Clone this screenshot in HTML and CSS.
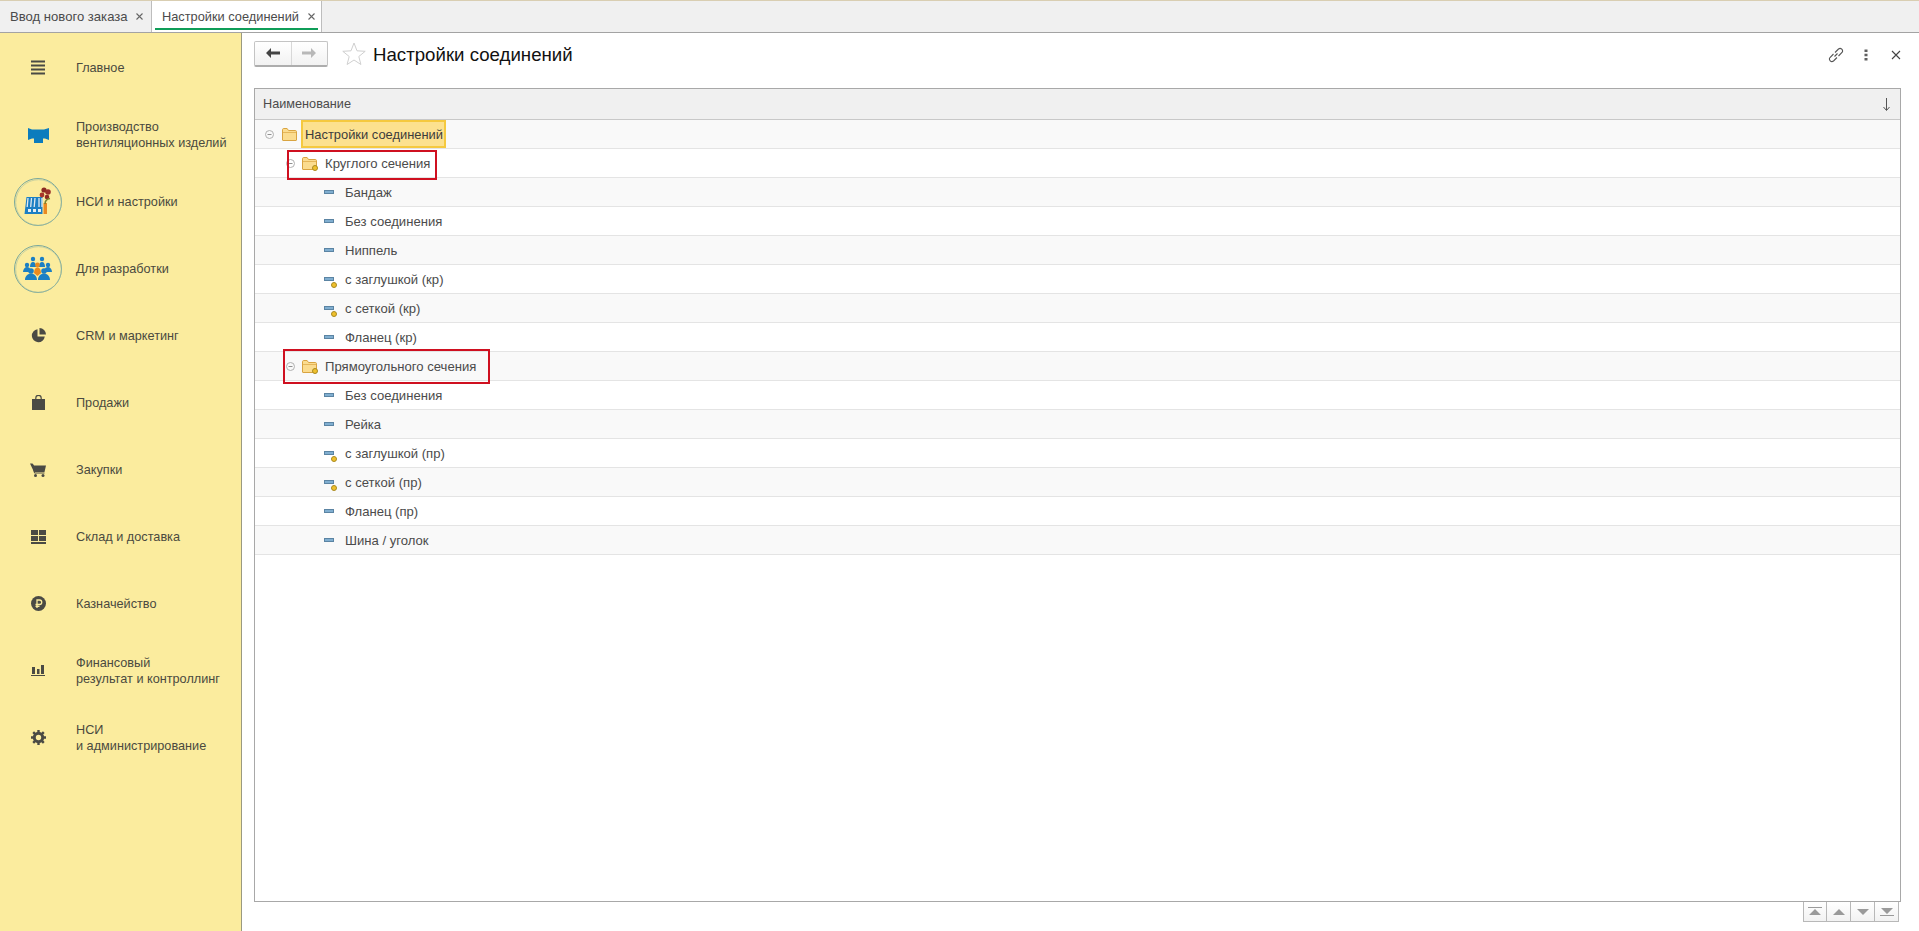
FILE: index.html
```html
<!DOCTYPE html>
<html lang="ru">
<head>
<meta charset="utf-8">
<title>Настройки соединений</title>
<link rel="stylesheet" href="styles.css">
</head>
<body>
<svg class="defs" width="0" height="0" aria-hidden="true">
  <symbol id="folder" viewBox="0 0 15 13"><path d="M.5 12V1.700C.5 1 1 .5 1.700.5h3.400l1.400 2h6.800c.7 0 1.200.5 1.200 1.200V12c0 .3-.2.500-.5.500H1c-.3 0-.5-.2-.5-.5z" fill="#fbdc8f" stroke="#d9a441"/><path d="M1 4.500h13" stroke="#e5b65a"/></symbol>
  <symbol id="dash" viewBox="0 0 10 4"><rect x=".5" y=".5" width="9" height="3" fill="#80aed0" stroke="#5b84a3"/></symbol>
  <symbol id="badge" viewBox="0 0 6 6"><circle cx="3" cy="3" r="2.500" fill="#f0c02c" stroke="#a88a20"/></symbol>
  <symbol id="toggle" viewBox="0 0 9 9"><circle cx="4.500" cy="4.500" r="4" fill="none" stroke="#b0b0b0"/><path d="M2.500 4.500h4" stroke="#909090"/></symbol>
  <symbol id="tabx" viewBox="0 0 7 7"><path d="M.5.500l6 6M6.500.500l-6 6" stroke="#666" stroke-width="1.100"/></symbol>
</svg>
<div class="tabs">
  <div class="tab"><span>Ввод нового заказа</span><svg class="tab-x"><use href="#tabx"/></svg></div>
  <div class="tab tab-active"><span>Настройки соединений</span><svg class="tab-x"><use href="#tabx"/></svg></div>
</div>
<div class="main">
  <nav class="side">
    <a class="nav"><span class="nav-ic"><svg width="14" height="15" viewBox="0 0 14 15"><path d="M0 1.500h14M0 5.500h14M0 9.500h14M0 13.500h14" stroke="#4a4a44" stroke-width="2"/></svg></span><span>Главное</span></a>
    <a class="nav"><span class="nav-ic"><svg width="21" height="16" viewBox="0 0 21 16"><path d="M0 1l4 1.500h12L21 1v12l-4-1.500h-2V16H6v-4.500H4L0 13z" fill="#0b7cbd"/></svg></span><span>Производство<br>вентиляционных изделий</span></a>
    <a class="nav"><span class="nav-ic"><svg width="50" height="50" viewBox="0 0 50 50"><circle cx="25" cy="25" r="23.500" fill="none" stroke="#7aa89c"/><circle cx="25.500" cy="25.500" r="22.800" fill="none" stroke="#a8bfa0" stroke-width=".6"/><path d="M11.500 37l2-17h16v17z" fill="#1b7fc4"/><path d="M15 21l-.8 9M18.500 21l-.8 9M22 21l-.8 9M26 21v9M29 21v9" stroke="#dfe9ee" stroke-width="1.300"/><path d="M15 32h3v3h-3zM20 32h3v3h-3zM25 32h3v3h-3z" fill="#e6eef2"/><rect x="30.500" y="26" width="3.500" height="11" fill="#e98a23"/><circle cx="31" cy="13" r="2.600" fill="#8c2a22"/><circle cx="35" cy="15" r="2.800" fill="#99302a"/><circle cx="29" cy="18" r="2.400" fill="#a8352a"/><circle cx="34" cy="20" r="2.300" fill="#8c2a22"/><path d="M32 27c0-3 2-5 5-5.500" stroke="#7a7f2c" stroke-width="1.500" fill="none"/></svg></span><span>НСИ и настройки</span></a>
    <a class="nav"><span class="nav-ic"><svg width="50" height="50" viewBox="0 0 50 50"><circle cx="25" cy="25" r="23.500" fill="none" stroke="#7aa89c"/><circle cx="25.500" cy="25.500" r="22.800" fill="none" stroke="#a8bfa0" stroke-width=".6"/><g fill="#1b7fc4"><circle cx="20" cy="15" r="2.200"/><circle cx="29" cy="15" r="2.200"/><path d="M17 23c0-3 1-5 3-5s3 2 3 5zM26 23c0-3 1-5 3-5s3 2 3 5z"/><circle cx="14" cy="21" r="2.200"/><circle cx="35" cy="21" r="2.200"/><path d="M10 28c0-3 2-5 4-5s3 1 3.500 3l-2 2zM39 28c0-3-2-5-4-5s-3 1-3.500 3l2 2z"/><circle cx="18" cy="27" r="2.800"/><circle cx="31" cy="27" r="2.800"/><path d="M12 36c0-4 3-6.500 6-6.500s6 2.500 6 6.500zM25 36c0-4 3-6.500 6-6.500s6 2.500 6 6.500z"/></g><circle cx="24.500" cy="21" r="2.400" fill="#ec8a1e"/><path d="M21 29c0-3.500 1.500-5.500 3.500-5.500S28 25.500 28 29l-3.500 3z" fill="#ec8a1e"/></svg></span><span>Для разработки</span></a>
    <a class="nav"><span class="nav-ic"><svg width="15" height="15" viewBox="0 0 15 15"><path d="M6.500 1.200A6.500 6.500 0 1 0 13.800 8.500H6.500z" fill="#4a4a44"/><path d="M8.500 0v6.500H15A6.500 6.500 0 0 0 8.500 0z" fill="#4a4a44"/></svg></span><span>CRM и маркетинг</span></a>
    <a class="nav"><span class="nav-ic"><svg width="13" height="15" viewBox="0 0 13 15"><path d="M0 4h13v11H0z" fill="#4a4a44"/><path d="M3.800 6V3a2.700 2.700 0 0 1 5.400 0v3" fill="none" stroke="#4a4a44" stroke-width="1.200"/></svg></span><span>Продажи</span></a>
    <a class="nav"><span class="nav-ic"><svg width="16" height="14" viewBox="0 0 16 14"><path d="M0 .500h2.500l1.500 2h12L14.500 9H4z" fill="#4a4a44"/><path d="M2.500 1l2 9h10" fill="none" stroke="#4a4a44"/><circle cx="5.500" cy="12.500" r="1.500" fill="#4a4a44"/><circle cx="13" cy="12.500" r="1.500" fill="#4a4a44"/></svg></span><span>Закупки</span></a>
    <a class="nav"><span class="nav-ic"><svg width="15" height="14" viewBox="0 0 15 14"><path d="M0 0h7v5H0zM8 0h7v5H8zM0 6h7v5H0zM8 6h7v5H8zM0 12h15v2H0z" fill="#4a4a44"/></svg></span><span>Склад и доставка</span></a>
    <a class="nav"><span class="nav-ic"><svg width="15" height="15" viewBox="0 0 15 15"><circle cx="7.500" cy="7.500" r="7.500" fill="#4a4a44"/><path d="M6 12V4h2.500a2 2 0 0 1 0 4.500H4.500M4.500 10.300h4" fill="none" stroke="#fbec9e" stroke-width="1.300"/></svg></span><span>Казначейство</span></a>
    <a class="nav"><span class="nav-ic"><svg width="14" height="11" viewBox="0 0 14 11"><path d="M1 2h3v7H1zM6 4h2.500v5H6zM10 0h3v9h-3zM0 10h14v1H0z" fill="#4a4a44"/></svg></span><span>Финансовый<br>результат и контроллинг</span></a>
    <a class="nav"><span class="nav-ic"><svg width="15" height="15" viewBox="0 0 15 15"><circle cx="7.500" cy="7.500" r="4.200" fill="none" stroke="#4a4a44" stroke-width="3"/><path d="M7.500 0v15M0 7.500h15M2.200 2.200l10.600 10.600M12.800 2.200L2.200 12.800" stroke="#4a4a44" stroke-width="2.400" stroke-dasharray="2.500 10"/></svg></span><span>НСИ<br>и администрирование</span></a>
  </nav>
  <section class="content">
    <header class="bar">
      <div class="nav-btns">
        <button class="nbtn"><svg width="14" height="10" viewBox="0 0 14 10"><path d="M0 5l5-5v3.500h9v3H5V10z" fill="#444"/></svg></button>
        <button class="nbtn"><svg width="14" height="10" viewBox="0 0 14 10"><path d="M14 5L9 0v3.500H0v3h9V10z" fill="#b8b8b8"/></svg></button>
      </div>
      <svg class="star" width="24" height="23" viewBox="0 0 24 23"><path d="M12 1l3 7.800 8.200.5-6.400 5.200 2.100 8L12 18l-6.900 4.500 2.100-8L.8 9.300 9 8.800z" fill="#fff" stroke="#cfcfcf"/></svg>
      <h1 class="title">Настройки соединений</h1>
      <div class="bar-tools">
        <svg width="16" height="16" viewBox="0 0 16 16"><path d="M6.500 9.500l3-3M5.500 7L2 10.500a2.500 2.500 0 0 0 3.500 3.500L9 10.500M7 5.500L10.500 2A2.500 2.500 0 0 1 14 5.500L10.500 9" fill="none" stroke="#555" stroke-width="1.100"/></svg>
        <svg class="tool-dots" width="4" height="12" viewBox="0 0 4 12"><path d="M.500.500h3v2.500h-3zM.500 4.800h3v2.500h-3zM.500 9h3v2.500h-3z" fill="#606060"/></svg>
        <svg width="10" height="10" viewBox="0 0 10 10"><path d="M1 1l8 8M9 1l-8 8" stroke="#444" stroke-width="1.100"/></svg>
      </div>
    </header>
    <div class="table">
      <div class="thead"><span>Наименование</span><svg width="7" height="13" viewBox="0 0 7 13"><path d="M3.500 0v12M.5 9l3 3.500 3-3.500" fill="none" stroke="#555"/></svg></div>
      <div class="row alt"><svg class="tg l0"><use href="#toggle"/></svg><svg class="fd fd-root"><use href="#folder"/></svg><span class="cell-sel">Настройки соединений</span></div>
      <div class="row"><svg class="tg l1"><use href="#toggle"/></svg><span class="fd-wrap"><svg class="fd"><use href="#folder"/></svg><svg class="bdg"><use href="#badge"/></svg></span><span class="lbl1">Круглого сечения</span><i class="mark mark-a"></i></div>
      <div class="row alt"><span class="it"><svg class="ds"><use href="#dash"/></svg></span><span>Бандаж</span></div>
      <div class="row"><span class="it"><svg class="ds"><use href="#dash"/></svg></span><span>Без соединения</span></div>
      <div class="row alt"><span class="it"><svg class="ds"><use href="#dash"/></svg></span><span>Ниппель</span></div>
      <div class="row"><span class="it"><svg class="ds"><use href="#dash"/></svg><svg class="bdg"><use href="#badge"/></svg></span><span>с заглушкой (кр)</span></div>
      <div class="row alt"><span class="it"><svg class="ds"><use href="#dash"/></svg><svg class="bdg"><use href="#badge"/></svg></span><span>с сеткой (кр)</span></div>
      <div class="row"><span class="it"><svg class="ds"><use href="#dash"/></svg></span><span>Фланец (кр)</span></div>
      <div class="row alt"><svg class="tg l1"><use href="#toggle"/></svg><span class="fd-wrap"><svg class="fd"><use href="#folder"/></svg><svg class="bdg"><use href="#badge"/></svg></span><span class="lbl1">Прямоугольного сечения</span><i class="mark mark-b"></i></div>
      <div class="row"><span class="it"><svg class="ds"><use href="#dash"/></svg></span><span>Без соединения</span></div>
      <div class="row alt"><span class="it"><svg class="ds"><use href="#dash"/></svg></span><span>Рейка</span></div>
      <div class="row"><span class="it"><svg class="ds"><use href="#dash"/></svg><svg class="bdg"><use href="#badge"/></svg></span><span>с заглушкой (пр)</span></div>
      <div class="row alt"><span class="it"><svg class="ds"><use href="#dash"/></svg><svg class="bdg"><use href="#badge"/></svg></span><span>с сеткой (пр)</span></div>
      <div class="row"><span class="it"><svg class="ds"><use href="#dash"/></svg></span><span>Фланец (пр)</span></div>
      <div class="row alt"><span class="it"><svg class="ds"><use href="#dash"/></svg></span><span>Шина / уголок</span></div>
    </div>
    <div class="pager">
      <button class="pbtn"><svg width="14" height="9" viewBox="0 0 14 9"><path d="M0 0h14v1H0zM7 2l6 6H1z" fill="#9a9a9a"/></svg></button>
      <button class="pbtn"><svg width="12" height="6" viewBox="0 0 12 6"><path d="M6 0l6 6H0z" fill="#9a9a9a"/></svg></button>
      <button class="pbtn"><svg width="12" height="6" viewBox="0 0 12 6"><path d="M6 6l6-6H0z" fill="#9a9a9a"/></svg></button>
      <button class="pbtn"><svg width="14" height="9" viewBox="0 0 14 9"><path d="M0 8h14v1H0zM7 7l6-6H1z" fill="#9a9a9a"/></svg></button>
    </div>
  </section>
</div>
</body>
</html>
```
FILE: styles.css
```css
* { box-sizing: border-box; }
html, body { height: 100%; }
body {
  margin: 0;
  display: flex;
  flex-direction: column;
  height: 931px;
  overflow: hidden;
  background: #fff;
  font-family: "Liberation Sans", Arial, sans-serif;
  font-size: 12.9px;
  color: #4b4b4b;
}
.defs { position: absolute; }

.tabs {
  flex: none;
  height: 33px;
  display: flex;
  background: #f0f0f0;
  border-top: 1px solid #d9ceb2;
  border-bottom: 1px solid #a3a3a3;
}
.tab {
  display: flex;
  align-items: center;
  gap: 8px;
  width: 151px;
  padding: 0 0 0 10px;
  font-size: 13.1px;
  white-space: nowrap;
}
.tab-x { flex: none; width: 7px; height: 7px; }
.tab-active {
  width: 171px;
  font-size: 12.8px;
  gap: 9px;
  background: #fff;
  border-left: 1px solid #bdbdbd;
  border-right: 1px solid #bdbdbd;
  position: relative;
}
.tab-active::after {
  content: "";
  position: absolute;
  left: 3px;
  right: 3px;
  bottom: 2px;
  height: 2px;
  background: #0f9d58;
}

.main { flex: 1; display: flex; min-height: 0; }
.side {
  flex: none;
  width: 242px;
  padding-top: 1px;
  background: #fbec9e;
  border-right: 1px solid #9a9a80;
  display: flex;
  flex-direction: column;
}
.nav {
  flex: none;
  height: 67px;
  display: flex;
  align-items: center;
  color: #4a4a40;
  font-size: 12.7px;
  line-height: 16px;
}
.nav-ic {
  flex: none;
  width: 76px;
  display: flex;
  justify-content: center;
  align-items: center;
}

.content {
  flex: 1;
  min-width: 0;
  display: flex;
  flex-direction: column;
  padding: 8px 18px 9px 12px;
}
.bar { flex: none; height: 47px; display: flex; align-items: flex-start; }
.nav-btns {
  display: flex;
  width: 74px;
  height: 26px;
  border: 1px solid #c4c4c4;
  border-bottom: 2px solid #adadad;
  border-radius: 2px;
  background: linear-gradient(#fff, #f2f2f2);
}
.nbtn {
  flex: 1;
  display: flex;
  align-items: center;
  justify-content: center;
  padding: 0 0 2px;
  border: 0;
  background: none;
}
.nbtn + .nbtn { border-left: 1px solid #d8d8d8; }
.star { margin: 1px 0 0 14px; }
.title {
  margin: 2px 0 0 7px;
  font-size: 18.67px;
  line-height: 24px;
  font-weight: 400;
  color: #111;
}
.bar-tools {
  margin: 3px 0 0 auto;
  display: flex;
  align-items: center;
  height: 22px;
}
.tool-dots { margin: 0 23px 0 20px; }

.table {
  flex: 1;
  min-height: 0;
  border: 1px solid #a8a8a8;
  background: #fff;
}
.thead {
  height: 31px;
  display: flex;
  align-items: center;
  justify-content: space-between;
  padding: 0 10px 0 8px;
  background: #f0f0f0;
  border-bottom: 1px solid #c8c8c8;
  font-size: 12.7px;
}
.row {
  position: relative;
  height: 29px;
  display: flex;
  align-items: center;
  border-bottom: 1px solid #e4e4e4;
  color: #4b4b4b;
  font-size: 13.1px;
}
.alt { background: #f9f9f9; }
.tg { flex: none; width: 9px; height: 9px; }
.l0 { margin-left: 10px; }
.l1 { margin-left: 31px; }
.fd { flex: none; width: 15px; height: 13px; display: block; }
.fd-root { margin-left: 8px; }
.cell-sel {
  margin-left: 4px;
  align-self: stretch;
  padding: 0 0 0 2px;
  display: flex;
  align-items: center;
  background: #fce18f;
  border: 2px solid #f5c93f;
  color: #3c3c3c;
  font-size: 12.9px;
  width: 145px;
  white-space: nowrap;
}
.fd-wrap { position: relative; flex: none; display: flex; margin-left: 7px; }
.fd-wrap .bdg { position: absolute; right: -1px; bottom: -1px; }
.lbl1 { margin-left: 8px; }
.it { position: relative; flex: none; width: 90px; padding-left: 69px; display: flex; }
.ds { width: 10px; height: 4px; display: block; }
.bdg { width: 6px; height: 6px; }
.it .bdg { position: absolute; left: 76px; top: 5px; }
.mark { position: absolute; z-index: 1; border: 2px solid #cf1020; pointer-events: none; }
.mark-a { left: 32px; top: 1px; width: 150px; height: 30px; }
.mark-b { left: 28px; top: -3px; width: 207px; height: 35px; }

.pager { flex: none; display: flex; justify-content: flex-end; padding-right: 2px; }
.pbtn {
  width: 24px;
  height: 20px;
  display: flex;
  align-items: center;
  justify-content: center;
  padding: 0;
  background: linear-gradient(#fff, #f2f2f2);
  border: 1px solid #b8b8b8;
  border-top: 0;
}
.pbtn + .pbtn { border-left: 0; }
```
